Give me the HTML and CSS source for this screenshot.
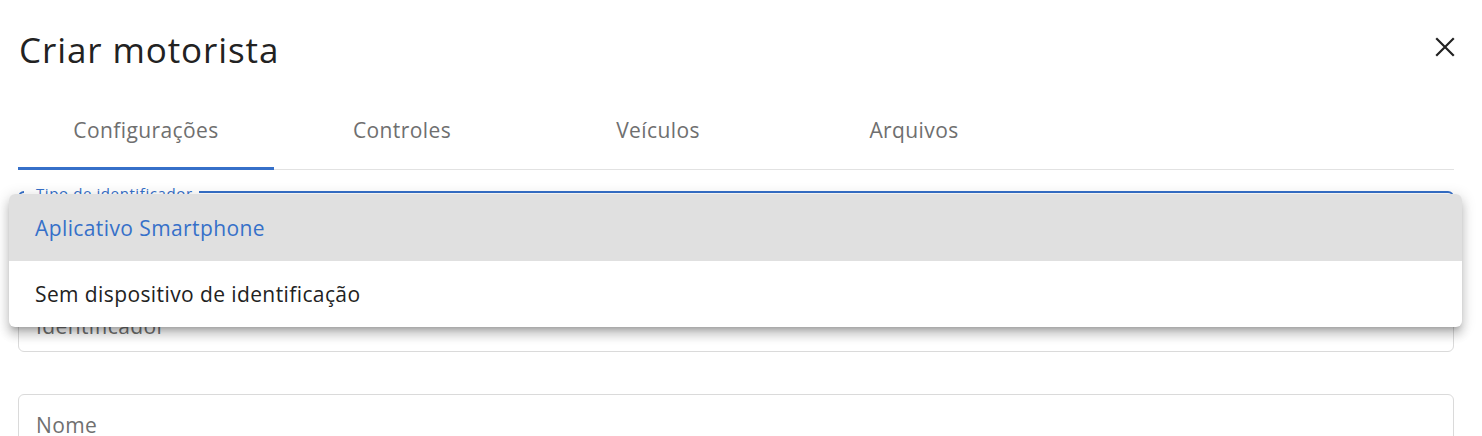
FILE: index.html
```html
<!DOCTYPE html>
<html lang="pt">
<head>
<meta charset="utf-8">
<link rel="stylesheet" href="styles.css">
</head>
<body>
<div class="dialog">
  <header class="head">
    <h1 class="title">Criar motorista</h1>
    <button class="close" aria-label="Fechar">
      <svg width="20" height="20" viewBox="0 0 20 20"><path d="M2 2 18 18M18 2 2 18" stroke="#222" stroke-width="2.2" stroke-linecap="square" fill="none"/></svg>
    </button>
  </header>
  <nav class="tabs">
    <div class="tab active">Configurações</div>
    <div class="tab">Controles</div>
    <div class="tab">Veículos</div>
    <div class="tab">Arquivos</div>
  </nav>
  <div class="form">
    <div class="field focused">
      <span class="legend">Tipo de identificador</span>
    </div>
    <div class="field f2">
      <span class="label">Identificador</span>
    </div>
    <div class="field f3">
      <span class="label">Nome</span>
    </div>
  </div>
  <ul class="menu">
    <li class="item selected">Aplicativo Smartphone</li>
    <li class="item">Sem dispositivo de identificação</li>
  </ul>
</div>
</body>
</html>
```
FILE: styles.css
```css
* { box-sizing: border-box; }
html, body { margin: 0; padding: 0; background: #fff; }
body { font-family: "Open Sans", "Noto Sans", sans-serif; color: #222; overflow: hidden; }
.dialog { position: relative; padding: 0 28px 0 18px; width: 1482px; height: 436px; }
.head { height: 100px; display: flex; align-items: center; justify-content: space-between; }
.title { margin: -2px 0 0 1px; font-weight: 400; font-size: 35px; color: #222; letter-spacing: 0.9px; }
.close { border: 0; background: none; padding: 0; width: 20px; height: 20px; margin-right: -1px; margin-top: -6px; cursor: pointer; }
.close svg { display: block; }
.tabs { display: flex; border-bottom: 1px solid #e2e2e2; height: 70px; }
.tab { position: relative; width: 256px; text-align: center; padding-top: 18px; font-size: 21px; line-height: 24px; letter-spacing: 0.4px; color: #6f6f6f; }
.tab.active::after { content: ""; position: absolute; left: 0; right: 0; bottom: -1px; height: 3px; background: #3670c9; }
.form { padding-top: 21px; display: flex; flex-direction: column; }
.field { position: relative; height: 57px; border: 1px solid #dadada; border-radius: 6px; }
.field.focused { border: 2px solid #3670c9; }
.f2 { margin-top: 47px; }
.f3 { margin-top: 42px; }
.legend { position: absolute; top: -9px; left: 4px; padding: 0 6px 0 12px; background: #fff; font-size: 15px; line-height: 18px; letter-spacing: 0.6px; color: #3670c9; }
.label { position: absolute; left: 17px; top: 18px; font-size: 21px; line-height: 24px; letter-spacing: 0.4px; color: #707070; }
.menu { position: absolute; left: 9px; top: 194px; width: 1453px; margin: 0; padding: 0; list-style: none; background: #fff; border-radius: 6px; overflow: hidden;
  box-shadow: 0 5px 5px -3px rgba(0,0,0,0.2), 0 8px 10px 1px rgba(0,0,0,0.14), 0 3px 14px 2px rgba(0,0,0,0.12); }
.item { height: 67px; display: flex; align-items: center; padding-left: 26px; font-size: 21px; letter-spacing: 0.4px; color: #222; }
.item + .item { height: 66px; }
.item.selected { background: #e0e0e0; color: #3670c9; }
```
